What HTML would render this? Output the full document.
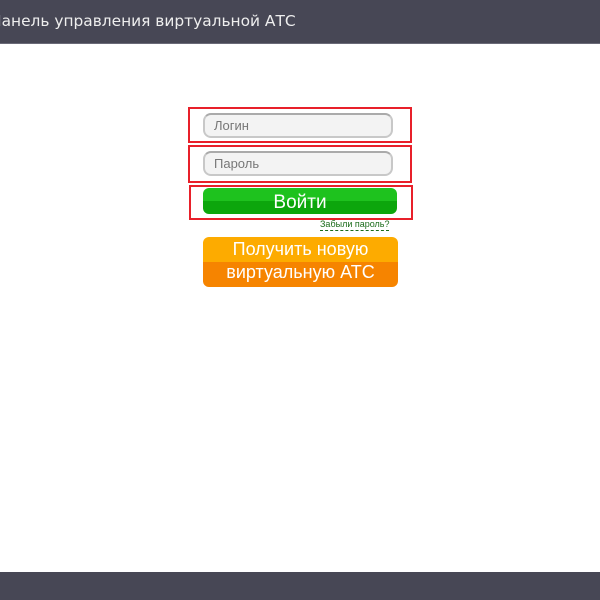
<!DOCTYPE html>
<html><head><meta charset="utf-8"><style>
body{margin:0;width:600px;height:600px;background:#fff;position:relative;overflow:hidden;font-family:"Liberation Sans",sans-serif}
.hdr{position:absolute;left:0;top:0;width:600px;height:43px;background:#474755;border-bottom:1px solid #6a6a78}
.hdr span{position:absolute;left:-10px;top:12px;color:#eee;font:15.4px "DejaVu Sans",sans-serif;white-space:nowrap}
.ftr{position:absolute;left:0;top:572px;width:600px;height:28px;background:#474755}
.rb{position:absolute;border:2px solid #e8202a;box-sizing:border-box}
.in{position:absolute;left:203px;width:190px;height:25px;box-sizing:border-box;border:2px solid #c8c8c8;border-top-color:#aaa;border-radius:8px;background:#f3f3f3;color:#777;font-size:13px;line-height:22px;padding-left:9px}
.btn{position:absolute;left:203px;top:188px;width:194px;height:26px;border-radius:6px;background:linear-gradient(#1ec21e 0,#1ec21e 50%,#0ca60c 50%);color:#fff;font-size:19px;text-align:center;line-height:30px}
.lnk{position:absolute;left:320px;top:219px;font-size:9px;color:#1a6b1a;border-bottom:1px dashed #1a6b1a;line-height:11px}
.or{position:absolute;left:203px;top:237px;width:195px;height:50px;border-radius:6px;background:linear-gradient(#fdab00 0,#fdab00 50%,#f68400 50%);color:#fff;font-size:18px;text-align:center;line-height:23px;padding-top:1px;box-sizing:border-box}
</style></head><body>
<div class="hdr"><span>Панель управления виртуальной АТС</span></div>
<div class="rb" style="left:188px;top:107px;width:224px;height:36px"></div>
<div class="rb" style="left:188px;top:145px;width:224px;height:38px"></div>
<div class="rb" style="left:189px;top:185px;width:224px;height:35px"></div>
<div class="in" style="top:113px">Логин</div>
<div class="in" style="top:151px">Пароль</div>
<div class="btn">Войти</div>
<div class="lnk">Забыли пароль?</div>
<div class="or">Получить новую<br>виртуальную АТС</div>
<div class="ftr"></div>
</body></html>
